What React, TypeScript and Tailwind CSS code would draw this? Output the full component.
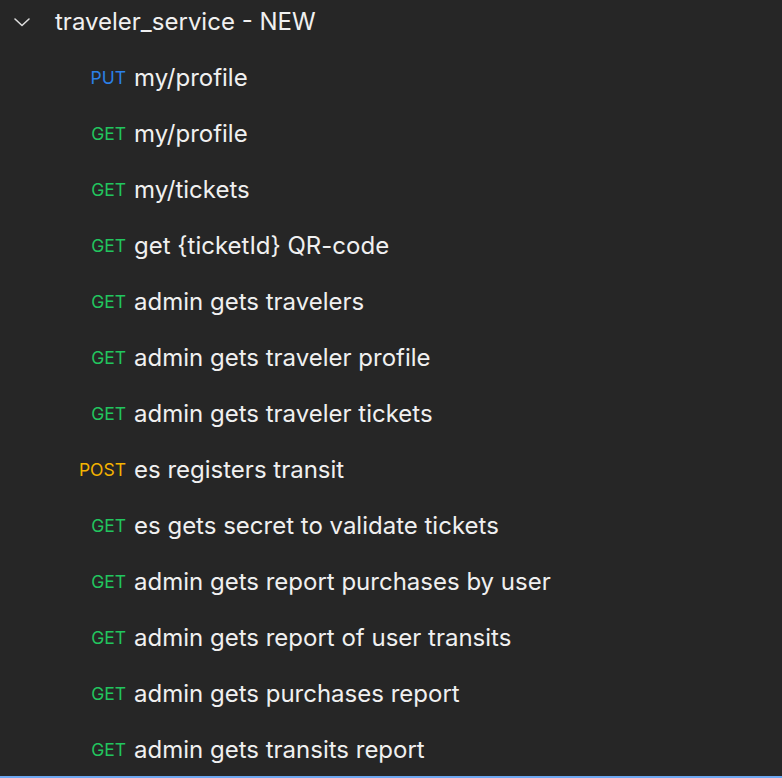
const ITEMS: { method: "GET" | "PUT" | "POST"; name: string }[] = [
  { method: "PUT", name: "my/profile" },
  { method: "GET", name: "my/profile" },
  { method: "GET", name: "my/tickets" },
  { method: "GET", name: "get {ticketId} QR-code" },
  { method: "GET", name: "admin gets travelers" },
  { method: "GET", name: "admin gets traveler profile" },
  { method: "GET", name: "admin gets traveler tickets" },
  { method: "POST", name: "es registers transit" },
  { method: "GET", name: "es gets secret to validate tickets" },
  { method: "GET", name: "admin gets report purchases by user" },
  { method: "GET", name: "admin gets report of user transits" },
  { method: "GET", name: "admin gets purchases report" },
  { method: "GET", name: "admin gets transits report" },
];

const METHOD_COLORS: Record<string, string> = {
  GET: "text-[#22c55e]",
  PUT: "text-[#2b80e8]",
  POST: "text-[#f5b300]",
};

export default function App() {
  return (
    <div className="h-[778px] w-[782px] overflow-hidden flex flex-col bg-[#262626] font-['Inter','Noto_Sans',sans-serif] text-[#f0f0f0]">
      <div className="h-[44px] shrink-0 flex items-center">
        <svg width="20" height="20" viewBox="0 0 20 20" fill="none" className="ml-[12px]">
          <path d="M3 7l7 6.5L17 7" stroke="#dcdcdc" strokeWidth="1.6" strokeLinecap="round" strokeLinejoin="round" />
        </svg>
        <span className="ml-[23px] text-[24px] leading-none">traveler_service - NEW</span>
      </div>
      <div className="flex-1 min-h-0 pt-[6px]">
        {ITEMS.map((item, i) => (
          <div key={i} className="h-[56px] flex items-center">
            <span className={`w-[126px] shrink-0 text-right text-[17.5px] leading-none ${METHOD_COLORS[item.method]}`}>
              {item.method}
            </span>
            <span className="ml-[8px] text-[24px] leading-none whitespace-nowrap">{item.name}</span>
          </div>
        ))}
      </div>
      <div className="h-[2px] shrink-0 bg-[#6ea8f2]" />
    </div>
  );
}
